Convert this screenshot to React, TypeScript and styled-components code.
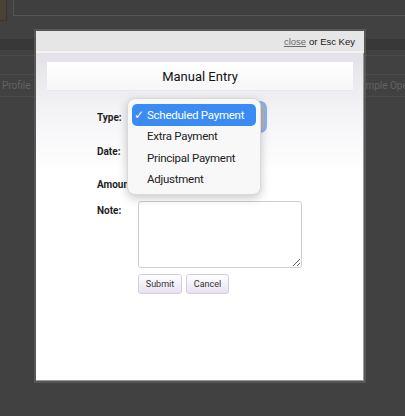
import React from 'react';
import styled, { createGlobalStyle } from 'styled-components';

const GlobalStyle = createGlobalStyle`
  html, body {
    margin: 0;
    padding: 0;
    background: #414141;
    height: 416px;
    overflow: hidden;
  }
  body {
    font-family: Roboto, "Liberation Sans", sans-serif;
  }
`;

const Page = styled.div`
  position: relative;
  width: 405px;
  height: 416px;
  background: #414141;
  overflow: hidden;
`;

const TopStrip = styled.div`
  display: flex;
  align-items: flex-start;
  gap: 6px;
  height: 39px;
`;

const BrownTab = styled.div`
  width: 6px;
  height: 20px;
  background: #4a4237;
  border-right: 1px solid #39332b;
  border-bottom: 1px solid #39332b;
`;

const TopBox = styled.div`
  flex: 1;
  height: 15px;
  margin-right: -10px;
  background: #3f3f3f;
  border-left: 1px solid #555;
  border-bottom: 1px solid #555;
`;

const Band = styled.div`
  height: 11px;
  background: #383838;
  border-bottom: 5px solid #414141;
`;

const Rule = styled.div<{ $h: number }>`
  height: ${({ $h }) => $h}px;
  border-top: 1px solid #4b4b4b;
`;

const TabsRow = styled.div`
  display: grid;
  grid-template-columns: 352px 53px;
  align-items: center;
  height: 21px;
  border-top: 1px solid #4b4b4b;
  border-bottom: 1px solid #4b4b4b;
  white-space: nowrap;
  overflow: hidden;
`;

const TabLabel = styled.span`
  font-size: 10px;
  color: #626262;
  padding-left: 2px;
  overflow: hidden;
`;

const Modal = styled.div`
  position: absolute;
  left: 34px;
  top: 29px;
  width: 328px;
  height: 350px;
  border: 2px solid #575757;
  box-shadow: inset -1px -1px 0 #9a9a9a;
  display: flex;
  flex-direction: column;
  background: #fff;
`;

const ModalHeader = styled.div`
  height: 20px;
  display: flex;
  align-items: center;
  justify-content: flex-end;
  padding-right: 9px;
  background: #e6e6e6;
  border-bottom: 2px solid #f3f3f3;
  font-family: "Liberation Sans", Arial, sans-serif;
  font-size: 9.5px;
  color: #1a1a1a;
`;

const CloseLink = styled.a`
  color: #6b6b6b;
  text-decoration: underline;
  margin-right: 3px;
`;

const ModalBody = styled.div`
  flex: 1;
  padding: 9px 10px 0 11px;
  margin-right: 1px;
  margin-bottom: 1px;
  background: linear-gradient(to bottom, #e4e2e8 0px, #f4f3f6 60px, #ffffff 120px);
`;

const TitleBox = styled.div`
  height: 28px;
  display: flex;
  align-items: center;
  justify-content: center;
  background: linear-gradient(to bottom, #ffffff, #f6f6f8);
  box-shadow: 0 1px 0 #e9e8ec;
  font-size: 13px;
  color: #111;
`;

const Form = styled.div`
  position: relative;
  margin: 11px 0 0 50px;
  display: grid;
  grid-template-columns: 41px 1fr;
  grid-template-rows: 32px 32px 30px auto;
  row-gap: 2px;
`;

const Label = styled.div<{ $top?: boolean }>`
  display: flex;
  align-items: ${({ $top }) => ($top ? 'flex-start' : 'center')};
  padding-top: ${({ $top }) => ($top ? '4px' : '0')};
  font-size: 10px;
  font-weight: 700;
  color: #1e1e1e;
  white-space: nowrap;
`;

const Field = styled.div`
  display: flex;
  align-items: center;
`;

const SelectBox = styled.div`
  width: 126px;
  height: 26px;
  border-radius: 4px;
  background: #b5b5b5;
  box-shadow: 0 0 0 3px rgba(70, 135, 240, 0.6);
`;

const TextInput = styled.div`
  width: 110px;
  height: 20px;
  border: 1px solid #ccc;
  border-radius: 3px;
  background: #fff;
`;

const NoteColumn = styled.div`
  display: flex;
  flex-direction: column;
  gap: 6px;
`;

const NoteArea = styled.textarea`
  width: 164px;
  height: 67px;
  box-sizing: border-box;
  border: 1px solid #cfcfcf;
  border-radius: 3px;
  background: #fff;
  resize: both;
  outline: none;
  margin: 0;
`;

const ButtonRow = styled.div`
  display: flex;
  gap: 4px;
`;

const Button = styled.button<{ $w: number }>`
  width: ${({ $w }) => $w}px;
  height: 20px;
  padding: 0;
  border: 1px solid #d3d0d8;
  border-radius: 3px;
  background: linear-gradient(to bottom, #ffffff, #e9e0f1);
  font-family: Roboto, "Liberation Sans", sans-serif;
  font-size: 9px;
  color: #333;
`;

const Menu = styled.div`
  position: absolute;
  left: 30px;
  top: -3px;
  width: 124px;
  height: 85px;
  padding: 5px 4px;
  border: 1px solid #d9d9d9;
  border-radius: 8px;
  background: #f8f8f8;
  box-shadow: 0 3px 10px rgba(0, 0, 0, 0.22);
  z-index: 5;
`;

const MenuItem = styled.div<{ $selected?: boolean }>`
  display: flex;
  align-items: center;
  height: 21.5px;
  padding-left: ${({ $selected }) => ($selected ? '2px' : '15px')};
  border-radius: 5px;
  background: ${({ $selected }) => ($selected ? '#3a8cf4' : 'transparent')};
  color: ${({ $selected }) => ($selected ? '#fff' : '#222')};
  font-size: 11.5px;
  letter-spacing: -0.25px;
  white-space: nowrap;
`;

const Check = styled.span`
  width: 13px;
  font-family: "DejaVu Sans", sans-serif;
  font-size: 12px;
  font-weight: 700;
`;

const options = ['Scheduled Payment', 'Extra Payment', 'Principal Payment', 'Adjustment'];

export default function App() {
  return (
    <>
      <GlobalStyle />
      <Page>
        <TopStrip>
          <BrownTab />
          <TopBox />
        </TopStrip>
        <Band />
        <Rule $h={18} />
        <TabsRow>
          <TabLabel>Profile</TabLabel>
          <TabLabel>Sample Operations</TabLabel>
        </TabsRow>

        <Modal>
          <ModalHeader>
            <CloseLink>close</CloseLink> or Esc Key
          </ModalHeader>
          <ModalBody>
            <TitleBox>Manual Entry</TitleBox>
            <Form>
              <Label>Type:</Label>
              <Field>
                <SelectBox />
              </Field>
              <Label>Date:</Label>
              <Field>
                <TextInput />
              </Field>
              <Label>Amount:</Label>
              <Field>
                <TextInput />
              </Field>
              <Label $top>Note:</Label>
              <NoteColumn>
                <NoteArea />
                <ButtonRow>
                  <Button $w={44}>Submit</Button>
                  <Button $w={43}>Cancel</Button>
                </ButtonRow>
              </NoteColumn>

              <Menu>
                {options.map((o, i) => (
                  <MenuItem key={o} $selected={i === 0}>
                    {i === 0 && <Check>✓</Check>}
                    {o}
                  </MenuItem>
                ))}
              </Menu>
            </Form>
          </ModalBody>
        </Modal>
      </Page>
    </>
  );
}
